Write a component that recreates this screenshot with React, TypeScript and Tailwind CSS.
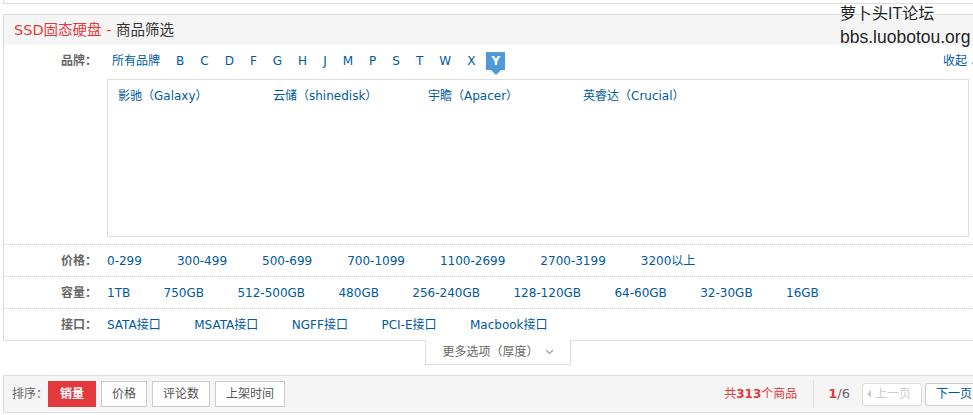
import React from "react";

const letters = ["B", "C", "D", "F", "G", "H", "J", "M", "P", "S", "T", "W", "X"];
const brands = ["影驰（Galaxy）", "云储（shinedisk）", "宇瞻（Apacer）", "英睿达（Crucial）"];
const prices = ["0-299", "300-499", "500-699", "700-1099", "1100-2699", "2700-3199", "3200以上"];
const caps = ["1TB", "750GB", "512-500GB", "480GB", "256-240GB", "128-120GB", "64-60GB", "32-30GB", "16GB"];
const ports = ["SATA接口", "MSATA接口", "NGFF接口", "PCI-E接口", "Macbook接口"];

function FilterRow({ label, items, gap }: { label: string; items: string[]; gap: string }) {
  return (
    <div className="flex h-[32px] items-center border-t border-dotted border-[#ccc]">
      <div className="w-[93px] shrink-0 text-right font-bold text-[#666]">{label}</div>
      <div className={`ml-[10px] flex ${gap}`}>
        {items.map((t) => (
          <a key={t} className="whitespace-nowrap text-[#005aa0]">
            {t}
          </a>
        ))}
      </div>
    </div>
  );
}

export default function App() {
  return (
    <div className="relative h-[415px] w-[973px] overflow-hidden bg-white font-['DejaVu_Sans','Noto_Sans_CJK_SC',sans-serif] text-[12px] leading-[16px] text-[#666]">
      {/* 上一块的底边 */}
      <div className="ml-[3px] h-[4px] w-[990px] border-b border-l border-[#ddd]" />

      {/* 筛选面板 */}
      <div className="ml-[3px] mt-[10px] w-[990px] border-l border-t border-[#ddd]">
        <div className="flex h-[30px] items-center bg-[#f5f5f5] pl-[10px] text-[14.5px] leading-[20px]">
          <span className="whitespace-pre text-[#e4393c]">SSD固态硬盘 - </span>
          <span className="text-[#333]">商品筛选</span>
        </div>

        {/* 品牌 */}
        <div className="flex pb-[7px] pt-[7px]">
          <div className="w-[93px] shrink-0 text-right font-bold leading-[18px] text-[#666]">品牌：</div>
          <div className="ml-[10px] flex-1">
            <div className="flex h-[18px] items-center justify-between pr-[14px]">
              <div className="flex gap-4 pl-[5px] leading-[18px] text-[#005aa0]">
                <a>所有品牌</a>
                {letters.map((l) => (
                  <a key={l}>{l}</a>
                ))}
                <a className="relative -mx-[5px] bg-[#4d9ad6] px-[5px] font-bold text-white">
                  Y
                  <span className="absolute left-1/2 top-full -translate-x-1/2 border-x-[5px] border-t-[5px] border-x-transparent border-t-[#4d9ad6]" />
                </a>
              </div>
              <a className="flex items-center gap-[4px] text-[#005aa0]">
                收起
                <svg width="8" height="6" viewBox="0 0 8 6" className="mt-[2px]">
                  <path d="M1 5 L4 2 L7 5" fill="none" stroke="#999" strokeWidth="1.5" />
                </svg>
              </a>
            </div>
            <div className="mt-[9px] flex h-[158px] w-[862px] items-start border border-[#ddd] pl-[10px] pt-[8px]">
              {brands.map((b) => (
                <a key={b} className="w-[155px] shrink-0 text-[#005aa0]">
                  {b}
                </a>
              ))}
            </div>
          </div>
        </div>

        <FilterRow label="价格：" items={prices} gap="gap-[35px]" />
        <FilterRow label="容量：" items={caps} gap="gap-[33.4px]" />
        <FilterRow label="接口：" items={ports} gap="gap-[33.5px]" />
      </div>

      {/* 更多选项 */}
      <div className="ml-[3px] flex w-[990px]">
        <div className="w-[422px] border-t border-[#ddd]" />
        <div className="flex h-[25px] w-[146px] items-center justify-center gap-[6px] border-x border-b border-[#ddd] pb-[1px] text-[#666]">
          <span>更多选项（厚度）</span>
          <svg width="9" height="6" viewBox="0 0 9 6">
            <path d="M1 1 L4.5 4.5 L8 1" fill="none" stroke="#aaa" strokeWidth="1.5" />
          </svg>
        </div>
        <div className="flex-1 border-t border-[#ddd]" />
      </div>

      {/* 排序栏 */}
      <div className="ml-[3px] mt-[10px] flex h-[38px] w-[990px] items-center border border-[#ddd] bg-[#f5f5f5] pl-[8px] pr-[9px]">
        <span className="text-[#666]">排序：</span>
        <div className="flex gap-[5px]">
          <span className="h-[26px] bg-[#e4393c] px-3 font-bold leading-[26px] text-white">销量</span>
          {["价格", "评论数", "上架时间"].map((s) => (
            <span key={s} className="h-[26px] border border-[#ccc] bg-white px-[10px] leading-[24px] text-[#555]">
              {s}
            </span>
          ))}
        </div>
        <div className="ml-auto flex items-center">
          <span className="text-[#e4393c]">
            共<b>313</b>个商品
          </span>
          <span className="ml-[16px] h-[28px] w-px bg-[#ddd]" />
          <span className="ml-[14px] text-[13px]">
            <b className="text-[#e4393c]">1</b>/6
          </span>
          <span className="ml-[12px] flex h-[23px] items-center rounded-[3px] border border-[#ddd] bg-white pl-[4px] pr-[10px] text-[#ccc]">
            <span className="border-y-[4px] border-r-[4px] border-y-transparent border-r-[#ccc]" />
            <span className="ml-[4px]">上一页</span>
          </span>
          <span className="ml-[3px] flex h-[23px] items-center rounded-[3px] border border-[#ccc] bg-white px-[10px] text-[#005aa0]">
            下一页
          </span>
        </div>
      </div>

      {/* 水印 */}
      <div className="absolute left-[840px] top-[3px] font-['Liberation_Sans','Noto_Sans_CJK_SC',sans-serif] text-[#222] [text-shadow:0_0_2px_#fff,0_0_2px_#fff]">
        <div className="text-[16px] leading-[22px]">萝卜头IT论坛</div>
        <div className="text-[17.5px] leading-[24px]">bbs.luobotou.org</div>
      </div>
    </div>
  );
}
